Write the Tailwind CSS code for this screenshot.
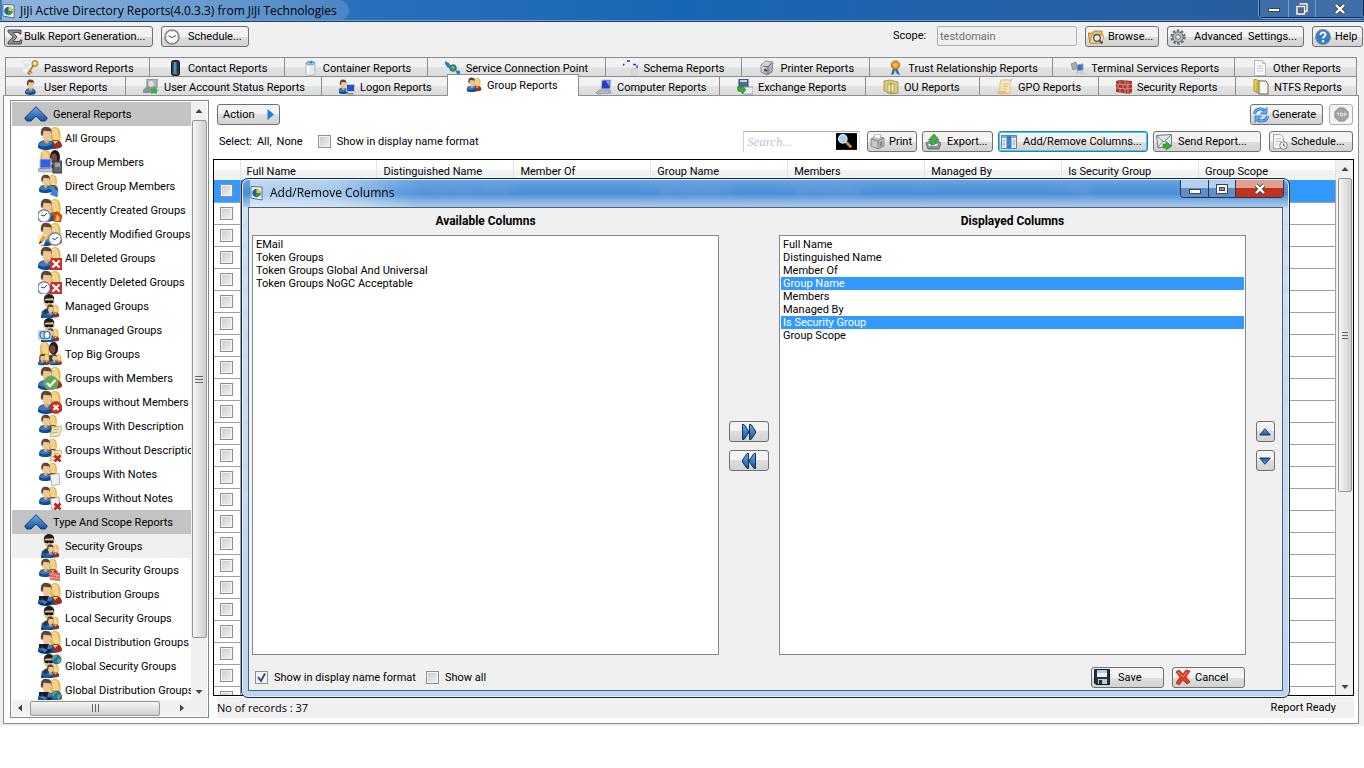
<!DOCTYPE html>
<html lang="en">
<head>
  <meta charset="UTF-8" />
  <meta name="viewport" content="width=device-width, initial-scale=1.0" />
  <title>JiJi Active Directory Reports</title>
  <script src="https://cdn.jsdelivr.net/npm/@tailwindcss/browser@4"></script>
</head>
<body class="bg-white font-['Roboto','Liberation_Sans',sans-serif] text-[11px] leading-[13px] text-black">

  <!-- Icon parts -->
  <svg class="absolute size-0 overflow-hidden">
    <defs>
      <linearGradient id="blue" x1="0" y1="0" x2="0" y2="1"><stop offset="0" stop-color="#6fabe4" /><stop offset="1" stop-color="#12529c" /></linearGradient>
      <linearGradient id="metal" x1="0" y1="0" x2="1" y2="1"><stop offset="0" stop-color="#f4f4f4" /><stop offset="1" stop-color="#8b8f94" /></linearGradient>

      <!-- People, 24px -->
      <symbol id="woman" viewBox="0 0 24 24">
        <path d="M12 13c0-4-1-12 5-12 5 0 6 5 5.500 11l-1 4h-8z" fill="#e2b84b" />
        <path d="M14 3c2-2 5-1 6 2l1 8c-1 2-3 3-5 2z" fill="#f4dc86" />
        <ellipse cx="16.500" cy="7.500" rx="2.800" ry="4" fill="#f2cf9c" />
        <path d="M11 22c0-5 2-8 6-8s7 2 7 6c0 2-5 3-9 3z" fill="#9c2f22" />
        <path d="M15 15l2 3 3-3z" fill="#f2cf9c" />
      </symbol>
      <symbol id="man" viewBox="0 0 24 24">
        <path d="M0 21c0-5 3-7 8-7s8 2 8 7c0 4-16 4-16 0z" fill="#174c8c" />
        <path d="M1 19c1-3 3-4 6-4l2 3 3-3c1 0 2 1 3 2-3 3-10 5-14 2z" fill="#3a7cc2" />
        <path d="M6 13h5v3l-2 2-3-2z" fill="#dba876" />
        <ellipse cx="8.500" cy="8" rx="4.500" ry="6" fill="#efc597" />
        <path d="M3 9C2 3 5 0 9 1c4 0 5 3 4.500 7l-1-3c-3 1-5-1-7 0L4.500 10z" fill="#5d4630" />
      </symbol>
      <symbol id="dark" viewBox="0 0 24 24">
        <ellipse cx="17" cy="8" rx="5" ry="7" fill="#1f1b1d" />
        <ellipse cx="16" cy="9" rx="3" ry="4.500" fill="#7b4a3c" />
        <path d="M10 21c0-5 3-6 7-6s7 3 7 7c-4 2-10 2-14-1z" fill="#343a42" />
      </symbol>
      <symbol id="pair" viewBox="0 0 24 24"><use href="#woman" /><use href="#man" /></symbol>
      <symbol id="small" viewBox="0 0 24 24"><use href="#pair" x="1" y="0" width="19" height="19" /></symbol>
      <symbol id="guard" viewBox="0 0 24 24">
        <path d="M3 24c0-6 3-10 8-10s8 3 8 7c-3 3-12 4-16 3z" fill="#2b3947" />
        <ellipse cx="11" cy="7.500" rx="4.500" ry="6.500" fill="#e6bd8d" />
        <path d="M6 8C5 2 8 0 11 0c4 0 6 3 5 7l-1-3c-3 1-6 0-8 1z" fill="#1f1f1f" />
        <path d="M6.500 6.500h9v2.200l-3.500.6-1-1-1 1-3.500-.6z" fill="#0b0b0b" />
      </symbol>
      <symbol id="secure" viewBox="0 0 24 24">
        <use href="#guard" />
        <use href="#pair" x="7" y="10" width="15" height="14" />
        <path d="M4 16c2 4 4 5 8 5l-1 3H7c-3-1-4-4-3-8z" fill="#1d5ba6" />
      </symbol>
      <symbol id="distribution" viewBox="0 0 24 24">
        <use href="#pair" />
        <path d="M1 14h10l-2 5 5 1-3 3H3l3-4-5-1z" fill="#171c25" /><path d="M3 17l7 3-4 3z" fill="#2d7fd0" />
      </symbol>

      <!-- Badges, 24px -->
      <symbol id="clockR" viewBox="0 0 24 24"><circle cx="17" cy="17" r="6.300" fill="#f5f7f8" stroke="#7d858c" stroke-width="1.400" /><path d="M17 17.500l3-2.500M17 17.500l-3-1" stroke="#454b52" fill="none" /></symbol>
      <symbol id="clockL" viewBox="0 0 24 24"><circle cx="6" cy="18" r="6.300" fill="#f5f7f8" stroke="#7d858c" stroke-width="1.400" /><path d="M6 18l3-3M6 18l-3-1" stroke="#454b52" fill="none" /></symbol>
      <symbol id="flame" viewBox="0 0 24 24"><path d="M16 24l-1-8 4-3 5 4-1 7z" fill="#cf4a16" /><path d="M17 23l2-7 3 4-1 3z" fill="#f5b43c" /></symbol>
      <symbol id="pencil" viewBox="0 0 24 24"><path d="M0 13h9l-3 10H0z" fill="#e9edf1" /><path d="M1 22l1-4 3-5 3 2-3 5z" fill="#eba51f" /><path d="M1 22l1-3 2 1z" fill="#222" /></symbol>
      <symbol id="delete" viewBox="0 0 24 24"><path d="M13 12h11v12H12v-8z" fill="#c9302c" /><path d="M14.500 14.500l7 7m0-7l-7 7" stroke="#fff" stroke-width="2.200" /></symbol>
      <symbol id="without" viewBox="0 0 24 24"><circle cx="18" cy="17.500" r="6" fill="#cf2f24" stroke="#8f1a12" stroke-width=".6" /><path d="M15.500 15l5 5m0-5l-5 5" stroke="#fff" stroke-width="2" /></symbol>
      <symbol id="check" viewBox="0 0 24 24"><circle cx="13" cy="17" r="7" fill="#55ad4b" stroke="#8b9a8a" /><path d="M9 17l3 3 5.500-6" stroke="#fff" stroke-width="2.400" fill="none" /></symbol>
      <symbol id="arrow" viewBox="0 0 24 24"><path d="M9 13c5-3 8 0 9 3l2-1-1 8-7-3 2-1c0-3-2-4-5-6z" fill="#2f8be0" stroke="#155a9f" stroke-width=".5" /></symbol>
      <symbol id="desc" viewBox="0 0 24 24"><path d="M14 13l9-1 1 2-3 8-9 1z" fill="#f0e6c0" stroke="#b59d58" stroke-width=".7" /><path d="M15 16l6-1m-7 4l6-1" stroke="#c5ad6b" /></symbol>
      <symbol id="note" viewBox="0 0 24 24"><path d="M12 13l9-2 1 11-8 2z" fill="#eef1f4" stroke="#8b949c" stroke-width=".7" /></symbol>
      <symbol id="xmark" viewBox="0 0 24 24"><path d="M16.500 17.500l6 6m0-6l-6 6" stroke="#c02616" stroke-width="2.600" /></symbol>
      <symbol id="machines" viewBox="0 0 24 24"><path d="M2 9h11v9H2z" fill="#2c62e8" stroke="#b6bcc4" /><path d="M0 19l15-1v4H1z" fill="#c0c5cb" stroke="#777" stroke-width=".5" /><path d="M15 11h9v12h-9z" fill="#62676e" stroke="#33373c" /><path d="M17 14h5m-5 2h5" stroke="#d7dade" /></symbol>
      <symbol id="rings" viewBox="0 0 24 24"><path d="M0 12h13v10H0z" fill="#b9d5f0" /><ellipse cx="5" cy="17" rx="3" ry="3.500" fill="none" stroke="#2f66a8" stroke-width="1.200" /><ellipse cx="9" cy="17" rx="3" ry="3.500" fill="#fff" stroke="#2f66a8" stroke-width="1.200" /></symbol>
      <symbol id="bricks" viewBox="0 0 24 24"><path d="M11 13l11 2v8l-10-1z" fill="#d9604e" /><path d="M11 16l11 2m-11 1l11 2M15 14v2m4 1v3m-5-1v3" stroke="#f0b4a8" stroke-width=".8" /></symbol>
      <symbol id="globe" viewBox="0 0 24 24"><circle cx="12" cy="12" r="11" fill="#2369b8" /><path d="M5 5c4-4 8-3 9-1l-3 4-4 1-1 4-4-1c0-3 1-5 3-7zM13 12l6-3 3 3-3 7-4 2z" fill="#53b04c" /></symbol>
      <symbol id="globeT" viewBox="0 0 24 24"><use href="#globe" x="13" y="0" width="11" height="11" /></symbol>
      <symbol id="globeB" viewBox="0 0 24 24"><use href="#globe" x="13" y="12" width="11" height="11" /></symbol>
      <symbol id="crowd" viewBox="0 0 24 24"><use href="#woman" x="-9" y="-1" width="22" height="22" /><use href="#dark" y="-1" width="22" height="22" /><use href="#pair" y="11" width="12" height="13" /><use href="#pair" x="12" y="11" width="12" height="13" /></symbol>
      <symbol id="team" viewBox="0 0 24 24"><use href="#woman" x="-9" y="-1" width="23" height="23" /><use href="#dark" y="-1" width="24" height="24" /></symbol>

      <!-- Tabs and buttons, 16px -->
      <symbol id="t-password" viewBox="0 0 16 16"><path d="M0 1h8v12H0z" fill="#f4f5f6" stroke="#d3d6da" stroke-width=".6" /><path d="M1 4h5M1 6h5M1 8h4" stroke="#c3c8cd" stroke-width=".8" /><circle cx="12" cy="3.500" r="2.600" fill="none" stroke="#c9952d" stroke-width="1.800" /><path d="M10.500 5.500L5 13m2-2l2 2m-4 0l2 1.500" stroke="#b27e1d" stroke-width="1.700" fill="none" /></symbol>
      <symbol id="t-contact" viewBox="0 0 16 16"><rect x="4.500" y=".5" width="8" height="15" rx="2" fill="#2b3340" stroke="#151a22" /><rect x="6.500" y="2" width="3" height="11" fill="#4b8fc0" /><path d="M6 13.500h4.500" stroke="#5e7f9e" /></symbol>
      <symbol id="t-container" viewBox="0 0 16 16"><path d="M4 3v11c0 2 9 2 9 0V3z" fill="#e3eaf0" stroke="#9aa6b0" stroke-width=".7" /><ellipse cx="8.500" cy="3" rx="4.500" ry="2" fill="#8fc4e6" stroke="#6b9bbd" stroke-width=".7" /><path d="M6 6v8" stroke="#fff" stroke-width="2" /><path d="M7 3l2-2 2 2z" fill="#2d78b8" /></symbol>
      <symbol id="t-scp" viewBox="0 0 16 16"><path d="M0 1l4 2 2 4-3 1-3-4z" fill="#2781c4" /><circle cx="8" cy="8" r="3.300" fill="#3c9c4a" stroke="#1b6aa8" /><path d="M10 10l5 1v4l-3-1z" fill="#2781c4" /><path d="M7 6l2 1-1 2z" fill="#9de07d" /></symbol>
      <symbol id="t-schema" viewBox="0 0 16 16"><path d="M0 6V4.500h2M4 1h3M10 4.500h4V8" stroke="#2434e0" stroke-width="1.300" fill="none" stroke-dasharray="3 1.500" /><path d="M9 9h5v6H9z" fill="#e9ebee" stroke="#b7bcc2" stroke-width=".7" /><path d="M10 11h3m-3 2h3" stroke="#aeb4bb" stroke-width=".7" /></symbol>
      <symbol id="t-printer" viewBox="0 0 16 16"><path d="M2 5l5-4 7 1-1 10-5 3-6-3z" fill="url(#metal)" stroke="#686d73" stroke-width=".7" /><path d="M4 6l5 1v7M9 7l4-4" stroke="#5c6168" fill="none" /><path d="M5 9l3 .6v2L5 11z" fill="#3d4249" /></symbol>
      <symbol id="t-trust" viewBox="0 0 16 16"><path d="M6 8l-2 7 3-1 1-4 2 4 3 1-3-7z" fill="#2a6dbd" /><circle cx="8.500" cy="5" r="4.300" fill="#e98c1d" stroke="#b9630c" stroke-width=".7" /><circle cx="8.500" cy="5" r="2" fill="#f8c462" /></symbol>
      <symbol id="t-terminal" viewBox="0 0 16 16"><path d="M1 4l5-2 1 6-4 2z" fill="#a8adb3" stroke="#7a8087" stroke-width=".7" /><path d="M7 5l6-1v6l-6 1z" fill="#3775d8" stroke="#9da3a9" /><path d="M6 12l8-1 1 3H5z" fill="#c9cdd2" /></symbol>
      <symbol id="t-doc" viewBox="0 0 16 16"><path d="M2.500.5h8l3 3v12h-11z" fill="#fafafa" stroke="#b5b8bc" /><path d="M10.500.5v3h3" fill="#e1e3e5" stroke="#b5b8bc" /><path d="M5 6h6M5 8.500h6M5 11h6" stroke="#c5c8cb" /></symbol>
      <symbol id="t-user" viewBox="0 0 16 16"><use href="#man" x="2" width="16" height="16" /></symbol>
      <symbol id="t-status" viewBox="0 0 16 16"><path d="M4 0h10v9H4z" fill="#b5b9be" stroke="#777c82" /><path d="M0 11l4-4h6l4 4v3H0z" fill="#8e9399" /><ellipse cx="8" cy="5" rx="2.500" ry="3" fill="#dcdfe2" /><path d="M12 7l1 3 3 1-3 1 1 3-3-1-3 1 1-3-2-2h3z" fill="#35b233" /></symbol>
      <symbol id="t-logon" viewBox="0 0 16 16"><use href="#man" x="-1" width="15" height="15" /><path d="M7.500 5.500h8v7h-8z" fill="#2450cf" stroke="#c4c8cd" /><path d="M9 14h5l1 1.500H8z" fill="#888e95" /></symbol>
      <symbol id="t-group" viewBox="0 0 16 16"><use href="#pair" width="16" height="15" /></symbol>
      <symbol id="t-computer" viewBox="0 0 16 16"><path d="M6 1h9l-1 9H5z" fill="#2043cf" stroke="#c2c6cb" /><path d="M10 2h4l-1 5z" fill="#7d9cf5" /><path d="M3 11h11l1 3-13 1-2-1z" fill="#b8bcc2" stroke="#7e848b" stroke-width=".7" /></symbol>
      <symbol id="t-exchange" viewBox="0 0 16 16"><path d="M2 0h9v9H2z" fill="#4d6f92" stroke="#36495c" /><path d="M3 2h7" stroke="#c1d3e4" stroke-width="2" /><path d="M6 8h10v7H6z" fill="#eceff2" stroke="#868c93" stroke-width=".8" /><path d="M0 8l5 0V6l4 5-4 4v-2L1 12z" fill="#35ad2e" stroke="#1c7217" stroke-width=".5" /></symbol>
      <symbol id="t-ou" viewBox="0 0 16 16"><path d="M1 2l6-1 8 2v11l-7 1-7-3z" fill="#d9c877" stroke="#96853a" stroke-width=".7" /><path d="M5 5h6v8H5z" fill="#f6eebb" stroke="#a89a52" stroke-width=".8" /><path d="M8 4v10" stroke="#8e8243" /></symbol>
      <symbol id="t-gpo" viewBox="0 0 16 16"><path d="M4 1h11c-2 1-2 3-2 5v8H3V5z" fill="#fbe9c0" stroke="#d9b170" stroke-width=".8" /><path d="M0 12h9c0 2 1 3 3 3H2c-1 0-2-1-2-3z" fill="#f0b870" /><path d="M6 5h5M6 7.500h5M6 10h4" stroke="#dcb678" /></symbol>
      <symbol id="t-security" viewBox="0 0 16 16"><path d="M0 2l4-1 12 1v11l-3 2-13-2z" fill="#a83a2b" /><path d="M0 5l12 1 4-1M0 9l12 1 4-1M4 2v4m5-4v4M2 6v3m5-3v4m4-4v4M4 9v5m5-4v4M12 3v12" stroke="#dba397" stroke-width=".8" fill="none" /></symbol>
      <symbol id="t-ntfs" viewBox="0 0 16 16"><path d="M1 0l6 2v13l-6-3z" fill="#e7d04b" stroke="#9a8823" stroke-width=".8" /><path d="M6 2h7l2 3v10H6z" fill="#f6f6f0" stroke="#5b5a4b" stroke-width=".9" /><path d="M4 3v11" stroke="#b39f2e" /></symbol>

      <symbol id="i-app" viewBox="0 0 14 16"><path d="M1 1.500l11 .5v13L1 13z" fill="#f7f9fb" stroke="#5b6b7b" /><circle cx="6.500" cy="8" r="4.300" fill="#1c64a9" /><path d="M6.500 3.700c3 0 4.500 2 4.300 4.600L6.500 8z" fill="#e8c637" /><path d="M6.500 8l4 1c-1 2.500-3 3.500-5 3z" fill="#3d9c3a" /></symbol>
      <symbol id="i-sigma" viewBox="0 0 16 16"><path d="M1 1h13v4h-2V3.500H6L10 8l-4 4.500h7V11h2l-1 4H1v-2l5-5-5-5z" fill="#8a8e92" stroke="#35383b" stroke-width=".8" /></symbol>
      <symbol id="i-clock" viewBox="0 0 16 16"><circle cx="8" cy="8" r="7" fill="#f7f9fa" stroke="#7f868c" stroke-width="1.600" /><path d="M8 8.500l4-2M8 8.500L4.500 7" stroke="#4f555a" fill="none" /><path d="M8 2v1M8 13v1M2 8h1M13 8h1" stroke="#999" /></symbol>
      <symbol id="i-browse" viewBox="0 0 16 16"><path d="M0 4h5l1-2h8v12H2z" fill="#e7b963" stroke="#a67622" stroke-width=".8" /><path d="M2 14l2-8h12l-2 8z" fill="#f9dfa0" stroke="#b98a35" stroke-width=".7" /><circle cx="9" cy="9" r="3.300" fill="#d8e9f5" stroke="#4a4d50" stroke-width="1.200" /><path d="M11.500 11.500l3 3" stroke="#4a4d50" stroke-width="1.800" /></symbol>
      <symbol id="i-gear" viewBox="0 0 16 16"><circle cx="8" cy="8" r="6.200" fill="none" stroke="#70777f" stroke-width="3" stroke-dasharray="2.400 1.500" /><circle cx="8" cy="8" r="5.200" fill="#b3bac1" stroke="#6d747b" /><circle cx="8" cy="8" r="2.300" fill="#eef0f2" stroke="#6d747b" /></symbol>
      <symbol id="i-help" viewBox="0 0 16 16"><circle cx="8" cy="8" r="7.300" fill="#2c7fd0" stroke="#6f8294" stroke-width="1.200" /><path d="M5.500 6c0-3.500 5-3.300 5-.5C10.500 7.500 8 7.500 8 9.600" fill="none" stroke="#fff" stroke-width="1.900" /><circle cx="8" cy="12.200" r="1.200" fill="#fff" /></symbol>
      <symbol id="i-refresh" viewBox="0 0 16 16"><path d="M1.500 7C2 2 8 .500 11.500 3.500M14.500 9c-.5 5-6.500 6.500-10 3.500" fill="none" stroke="#1f70c4" stroke-width="3" /><path d="M1.500 7C2 2 8 .500 11.500 3.500M14.500 9c-.5 5-6.500 6.500-10 3.500" fill="none" stroke="#5db2f5" stroke-width="1.600" /><path d="M14 .5V7H7.500zM2 15.500V9h6.500z" fill="#5db2f5" stroke="#1f70c4" stroke-width=".7" /></symbol>
      <symbol id="i-print" viewBox="0 0 16 16"><path d="M1 5l5-3 8 2v8l-6 3-7-3z" fill="#c5c8cc" stroke="#75797e" stroke-width=".8" /><path d="M1 5l7 2 6-3M8 7v8" stroke="#7f8388" fill="none" /><path d="M4 4l1-4 6 1-1 4z" fill="#fff" stroke="#9a9ea2" stroke-width=".7" /><path d="M9.500 8l3-1v5l-3 1z" fill="#85898e" /></symbol>
      <symbol id="i-export" viewBox="0 0 16 16"><path d="M1 9l4-2h8l3 2-2 6H3z" fill="#8a94a0" stroke="#525b66" stroke-width=".8" /><path d="M3 10h10l-1 2H4z" fill="#e0e5ea" /><path d="M6 11V6H3.500L9 0l5 6h-3c0 3-1 5-5 5z" fill="#42b43c" stroke="#1e7a1a" stroke-width=".7" /></symbol>
      <symbol id="i-columns" viewBox="0 0 16 16"><path d="M.5 1.500h15v13H.5z" fill="#fff" stroke="#6285a8" /><path d="M1 2h14v2H1z" fill="#86a9cc" /><path d="M6 2h4v12H6z" fill="#2c7cd4" /><path d="M1 7h14M1 10h14M5.500 2v12M10.500 2v12M3 4v10M13 4v10" stroke="#7f9fbe" stroke-width=".7" /></symbol>
      <symbol id="i-send" viewBox="0 0 16 16"><path d="M.5 1.500l15-1v11L2 14z" fill="#e5e8ea" stroke="#73787d" /><path d="M1 2l7 6 7-7M2 13l5-6m7 4L9 7" stroke="#8a8f94" fill="none" /><path d="M7 10h3V8l6 4-6 4v-2H7z" fill="#35ad2e" stroke="#1c7217" stroke-width=".5" /></symbol>
      <symbol id="i-report" viewBox="0 0 16 16"><path d="M1.500.5h7l3 3v11h-10z" fill="#fafafa" stroke="#a4a8ac" /><path d="M3.500 5h6m-6 2.500h6m-6 2.500h3" stroke="#b9bdc1" /><circle cx="11.500" cy="11.500" r="3.800" fill="#eef1f3" stroke="#7a8086" /><path d="M11.500 9.500v2l1.500.8" stroke="#555" fill="none" stroke-width=".9" /></symbol>
      <symbol id="i-stop" viewBox="0 0 16 16"><path d="M5 1h6l4 4v6l-4 4H5l-4-4V5z" fill="#a3a3a3" stroke="#8b8b8b" /><path d="M3 6.500h2.500m-1 0v3M7 6.500h2v3H7zM11 10V6.500h2v2h-2" stroke="#e4e4e4" fill="none" /></symbol>
      <symbol id="i-save" viewBox="0 0 16 16"><path d="M.5.500h15v15H2l-1.500-1.500z" fill="#2a3340" stroke="#141a22" /><path d="M3 1h10v7H3z" fill="#eaf3fb" /><path d="M3 1h10v3H3z" fill="#a9cdee" /><path d="M4 10h9v5H4z" fill="#c3c8ce" /><path d="M5 11h3v4H5z" fill="#252b33" /></symbol>
      <symbol id="i-cancel" viewBox="0 0 16 16"><path d="M1 3l3-2 4 4 3-4 4 1-4 6 4 5-3 2-4-4-4 5-3-2 4-6z" fill="#e23f22" stroke="#a52410" stroke-width=".8" /><path d="M3 3l5 5 4-5" stroke="#f58a5c" fill="none" /></symbol>
      <symbol id="i-up" viewBox="0 0 24 16"><path d="M12 .700L.7 12l2 3H7l5-5 5 5h4.300l2-3z" fill="url(#blue)" stroke="#123e78" /></symbol>
      <symbol id="i-next" viewBox="0 0 16 16"><path d="M1.500.5h1.500L7.500 7v2L3 15.500H1.500zM8.500.500H10l4.500 6.500v2L10 15.500H8.500z" fill="url(#blue)" stroke="#0d315f" /></symbol>
      <symbol id="i-tri" viewBox="0 0 12 8"><path d="M6 .7L11.300 7H.7z" fill="url(#blue)" stroke="#123e78" /></symbol>
      <symbol id="i-find" viewBox="0 0 20 16"><path d="M0 0h20v16H0z" fill="#000" /><path d="M9.500 8.500l5 5" stroke="#d98a3c" stroke-width="2.600" /><circle cx="6.500" cy="5.500" r="4" fill="#9fd1f5" stroke="#e5eef5" stroke-width="1.200" /></symbol>
      <symbol id="i-arrow" viewBox="0 0 8 8"><path d="M4 2L7.500 6h-7z" fill="#434343" /></symbol>
    </defs>
  </svg>

  <div class="flex h-[calc(100vh-42px)] flex-col overflow-hidden bg-[#f0f0f0]">

    <!-- Title bar -->
    <header class="flex h-[22px] shrink-0 items-start justify-between border-b border-[#1c3f6b] bg-linear-to-r from-[#3b7cc0] via-[#1766b5] to-[#2b5c99] pl-[2px] shadow-[inset_0_-1px_0_#6f9fd3]">
      <div class="flex h-[21px] items-center gap-1 rounded-r-full bg-linear-to-r from-[#8fb5dd] via-[#6d9fd3] to-[#5d92cb]/60 pr-3">
        <svg class="h-4 w-[14px]"><use href="#i-app" /></svg>
        <h1 class="font-['Open_Sans','Noto_Sans',sans-serif] text-xs leading-5">JiJi Active Directory Reports(4.0.3.3) from JiJi Technologies</h1>
      </div>
      <div class="flex h-[18px] rounded-b border border-t-0 border-[#0c2b52] shadow-[0_0_0_1px_#7b9cc4]">
        <button aria-label="Minimize" class="flex w-[29px] items-end justify-center border-r border-[#7b9cc4] bg-[#3f6ea8] pb-[5px]"><span class="h-[4px] w-3 border border-[#444] bg-white"></span></button>
        <button aria-label="Restore" class="flex w-[27px] items-center justify-center border-r border-[#7b9cc4] bg-[#3f6ea8]"><svg class="size-3" viewBox="0 0 12 12"><path d="M3.500 1h7.500v7.500H8.500M1 3.500h7.500V11H1z" fill="none" stroke="#444" stroke-width="2.600" /><path d="M3.500 1h7.500v7.500H8.500M1 3.500h7.500V11H1z" fill="none" stroke="#fff" stroke-width="1.500" /></svg></button>
        <button aria-label="Close" class="flex w-[47px] items-center justify-center bg-[#3f6ea8]"><svg class="size-3" viewBox="0 0 12 12"><path d="M2 2l8 8m0-8l-8 8" stroke="#444" stroke-width="4" /><path d="M2 2l8 8m0-8l-8 8" stroke="#fff" stroke-width="2.400" /></svg></button>
      </div>
    </header>

    <!-- Toolbar -->
    <div class="flex h-[35px] shrink-0 items-start gap-2 pt-1 pr-px pl-1">
      <button class="flex h-[21px] w-[149px] items-center gap-px rounded-[3px] border border-[#707070] bg-linear-to-b from-[#f3f3f3] from-50% via-[#dedede] via-50% to-[#d2d2d2] px-[2px] whitespace-nowrap"><svg class="size-4 shrink-0"><use href="#i-sigma" /></svg>Bulk Report Generation...</button>
      <button class="flex h-[21px] w-[88px] items-center gap-2 rounded-[3px] border border-[#707070] bg-linear-to-b from-[#f3f3f3] from-50% via-[#dedede] via-50% to-[#d2d2d2] px-[2px] whitespace-nowrap"><svg class="size-4 shrink-0"><use href="#i-clock" /></svg>Schedule...</button>
      <label for="scope" class="ml-auto w-9 pt-[3px]">Scope:</label>
      <input id="scope" type="text" value="testdomain" disabled class="h-5 w-[140px] rounded-[2px] border border-[#afafaf] bg-[#f0f0f0] px-[2px] text-[#6d6d6d]" />
      <button class="flex h-[21px] w-[74px] items-center gap-1 rounded-[3px] border border-[#707070] bg-linear-to-b from-[#f3f3f3] from-50% via-[#dedede] via-50% to-[#d2d2d2] px-[2px] whitespace-nowrap"><svg class="size-4 shrink-0"><use href="#i-browse" /></svg>Browse...</button>
      <button class="flex h-[21px] w-[137px] items-center gap-2 rounded-[3px] border border-[#707070] bg-linear-to-b from-[#f3f3f3] from-50% via-[#dedede] via-50% to-[#d2d2d2] px-[2px] whitespace-nowrap"><svg class="size-4 shrink-0"><use href="#i-gear" /></svg>Advanced&nbsp; Settings...</button>
      <button class="flex h-[21px] w-[51px] items-center gap-1 rounded-[3px] border border-[#707070] bg-linear-to-b from-[#f3f3f3] from-50% via-[#dedede] via-50% to-[#d2d2d2] px-[2px] whitespace-nowrap"><svg class="size-4 shrink-0"><use href="#i-help" /></svg>Help</button>
    </div>

    <!-- Tabs -->
    <nav class="shrink-0 pr-[7px] pl-[5px]">
      <div id="tabsTop" class="grid h-[19px] grid-cols-[144fr_135fr_143fr_178fr_137fr_128fr_183fr_182fr_122fr] border-l border-[#8c8e94]"></div>
      <div id="tabsBottom" class="grid h-[19px] grid-cols-[120fr_196fr_126fr_131fr_141fr_146fr_114fr_119fr_137fr_121fr] border-l border-[#8c8e94]"></div>
    </nav>

    <!-- Tab page -->
    <main class="mr-[5px] mb-[2px] ml-[3px] flex min-h-0 flex-1 gap-1 border border-[#8c8e94] bg-white pt-1 pr-1 pb-[5px] pl-[6px]">

      <!-- Report list -->
      <aside class="flex w-[199px] shrink-0 flex-col border border-[#828790] p-px">
        <div class="flex min-h-0 flex-1">
          <ul id="reports" class="min-w-0 flex-1 overflow-hidden"></ul>
          <div class="flex w-4 shrink-0 flex-col items-center bg-[#f0f0f0]">
            <svg class="h-[18px] w-2"><use href="#i-arrow" y="5" width="8" height="8" /></svg>
            <div class="flex w-[15px] basis-[518px] flex-col items-center justify-center gap-[2px] rounded-[2px] border border-[#979797] bg-linear-to-r from-[#f5f5f5] to-[#cfcfcf]">
              <span class="h-px w-2 bg-[#666]"></span><span class="h-px w-2 bg-[#666]"></span><span class="h-px w-2 bg-[#666]"></span>
            </div>
            <svg class="mt-auto h-4 w-2 rotate-180"><use href="#i-arrow" y="4" width="8" height="8" /></svg>
          </div>
        </div>
        <div class="flex h-4 items-center gap-[2px] bg-[#f0f0f0] pr-[17px]">
          <svg class="size-4 shrink-0 -rotate-90"><use href="#i-arrow" x="4" y="4" width="8" height="8" /></svg>
          <div class="flex h-[15px] w-[130px] items-center justify-center gap-[2px] rounded-[2px] border border-[#979797] bg-linear-to-b from-[#f5f5f5] to-[#cfcfcf]">
            <span class="h-2 w-px bg-[#666]"></span><span class="h-2 w-px bg-[#666]"></span><span class="h-2 w-px bg-[#666]"></span>
          </div>
          <svg class="ml-auto size-4 shrink-0 rotate-90"><use href="#i-arrow" x="4" y="4" width="8" height="8" /></svg>
        </div>
      </aside>

      <!-- Report -->
      <section class="flex min-w-0 flex-1 flex-col pt-1">
        <div class="flex gap-[6px] pr-px pl-1">
          <button class="flex h-[21px] w-[63px] items-center justify-between rounded-[3px] border border-[#707070] bg-linear-to-b from-[#f3f3f3] from-50% via-[#dedede] via-50% to-[#d2d2d2] px-[5px]">Action<svg class="h-[11px] w-[7px]" viewBox="0 0 7 11"><path d="M.5 0L7 5.500.500 11z" fill="#1f7fdc" /></svg></button>
          <button class="ml-auto flex h-[21px] w-[73px] items-center gap-[3px] rounded-[3px] border border-[#707070] bg-linear-to-b from-[#f3f3f3] from-50% via-[#dedede] via-50% to-[#d2d2d2] px-[2px]"><svg class="size-4 shrink-0"><use href="#i-refresh" /></svg>Generate</button>
          <button aria-label="Stop" disabled class="flex h-[21px] w-[24px] items-center justify-center rounded-[3px] border border-[#adadad] bg-[#f4f4f4]"><svg class="size-[15px]" viewBox="0 0 16 16"><use href="#i-stop" /></svg></button>
        </div>

        <div class="mt-[6px] flex items-center gap-[5px] pr-px pl-[6px]">
          <span>Select:</span>
          <a href="#">All,</a>
          <a href="#">None</a>
          <label class="ml-[10px] flex items-center gap-[6px]"><input type="checkbox" class="size-[13px] appearance-none border border-[#8e8f8f] bg-linear-to-br from-[#c4c9cf] to-[#f4f4f4] shadow-[inset_0_0_0_1px_#f4f4f4]" />Show in display name format</label>
          <div class="mr-[2px] ml-auto flex h-[21px] w-[117px] items-center border border-r-[#e3e3e3] border-b-white border-l-[#d0d0d0] border-t-[#abadb3] bg-white pr-[2px]">
            <input type="text" aria-label="Search" placeholder="Search..." class="w-[90px] pl-[3px] font-['Liberation_Serif',serif] text-[13px] italic placeholder:text-[#b9c6d3]" />
            <button aria-label="Find" class="ml-auto"><svg class="h-[17px] w-[21px]" ><use href="#i-find" /></svg></button>
          </div>
          <button class="flex h-[21px] w-[50px] items-center gap-[3px] rounded-[3px] border border-[#707070] bg-linear-to-b from-[#f3f3f3] from-50% via-[#dedede] via-50% to-[#d2d2d2] px-[2px] whitespace-nowrap"><svg class="size-4 shrink-0"><use href="#i-print" /></svg>Print</button>
          <button class="flex h-[21px] w-[71px] items-center gap-[6px] rounded-[3px] border border-[#707070] bg-linear-to-b from-[#f3f3f3] from-50% via-[#dedede] via-50% to-[#d2d2d2] px-[2px] whitespace-nowrap"><svg class="size-4 shrink-0"><use href="#i-export" /></svg>Export...</button>
          <button class="flex h-[21px] w-[150px] items-center gap-[6px] rounded-[3px] border border-[#2a7fae] bg-linear-to-b from-[#f3f3f3] from-50% via-[#dedede] via-50% to-[#d2d2d2] px-[2px] whitespace-nowrap shadow-[inset_0_0_0_1px_#48c8f5]"><svg class="size-4 shrink-0"><use href="#i-columns" /></svg>Add/Remove Columns...</button>
          <button class="mr-[3px] flex h-[21px] w-[108px] items-center gap-[6px] rounded-[3px] border border-[#707070] bg-linear-to-b from-[#f3f3f3] from-50% via-[#dedede] via-50% to-[#d2d2d2] px-[2px] whitespace-nowrap"><svg class="size-4 shrink-0"><use href="#i-send" /></svg>Send Report...</button>
          <button class="flex h-[21px] w-[84px] items-center gap-[3px] rounded-[3px] border border-[#707070] bg-linear-to-b from-[#f3f3f3] from-50% via-[#dedede] via-50% to-[#d2d2d2] px-[2px] whitespace-nowrap"><svg class="size-4 shrink-0"><use href="#i-report" /></svg>Schedule...</button>
        </div>

        <div class="relative mt-[7px] min-h-0 flex-1">
          <div class="flex h-full overflow-hidden border border-black">
            <div class="min-w-0 flex-1 overflow-hidden">
              <table class="w-full table-fixed border-collapse text-left">
                <thead>
                  <tr class="h-5 bg-linear-to-b from-white from-50% to-[#f1f2f4] to-50%">
                    <th class="w-[26px] border-r border-[#e2e3e6]"></th>
                    <th class="border-r border-[#e2e3e6] pt-[2px] pl-[6px] font-normal">Full Name</th>
                    <th class="border-r border-[#e2e3e6] pt-[2px] pl-[6px] font-normal">Distinguished Name</th>
                    <th class="border-r border-[#e2e3e6] pt-[2px] pl-[6px] font-normal">Member Of</th>
                    <th class="border-r border-[#e2e3e6] pt-[2px] pl-[6px] font-normal">Group Name</th>
                    <th class="border-r border-[#e2e3e6] pt-[2px] pl-[6px] font-normal">Members</th>
                    <th class="border-r border-[#e2e3e6] pt-[2px] pl-[6px] font-normal">Managed By</th>
                    <th class="border-r border-[#e2e3e6] pt-[2px] pl-[6px] font-normal">Is Security Group</th>
                    <th class="border-r border-[#e2e3e6] pt-[2px] pl-[6px] font-normal">Group Scope</th>
                  </tr>
                </thead>
                <tbody id="rows"></tbody>
              </table>
            </div>
            <div class="flex w-[17px] shrink-0 flex-col items-center bg-[#f0f0f0]">
              <svg class="h-[18px] w-2"><use href="#i-arrow" y="5" width="8" height="8" /></svg>
              <div class="flex w-[14px] basis-[314px] flex-col items-center justify-center gap-[2px] rounded-[2px] border border-[#979797] bg-linear-to-r from-[#f5f5f5] to-[#cfcfcf]">
                <span class="h-px w-[6px] bg-[#666]"></span><span class="h-px w-[6px] bg-[#666]"></span><span class="h-px w-[6px] bg-[#666]"></span>
              </div>
              <svg class="mt-auto h-4 w-2 rotate-180"><use href="#i-arrow" y="4" width="8" height="8" /></svg>
            </div>
          </div>

          <!-- Add/Remove Columns dialog -->
          <div role="dialog" aria-labelledby="dialogTitle" class="absolute top-[19px] right-16 -bottom-[2px] left-7 flex flex-col rounded-[7px] border border-[#1b2a3c] bg-linear-to-b from-[#a9c8ea]/50 to-[#b9d6f3] px-[6px] pb-[6px] shadow-[inset_0_0_0_1px_#e3effb] backdrop-blur-[3px]">
            <div class="-mx-[5px] mt-px flex h-[27px] shrink-0 items-start rounded-t-[6px] bg-linear-to-b from-[#5f9ad8]/70 via-[#2f78c4]/60 to-[#a5c8ec] pl-[7px]">
              <div class="flex h-full items-center gap-[6px] bg-linear-to-r from-white/60 via-white/50 to-transparent pr-6 pb-px">
                <svg class="h-4 w-[14px]"><use href="#i-app" /></svg>
                <h2 id="dialogTitle" class="font-['Open_Sans','Noto_Sans',sans-serif] text-xs leading-5">Add/Remove Columns</h2>
              </div>
              <div class="mr-1 ml-auto flex h-[18px] overflow-hidden rounded-b border border-t-0 border-[#1f3a5c]">
                <button aria-label="Minimize" class="flex w-[28px] items-end justify-center border-r border-[#1f3a5c] bg-linear-to-b from-[#b5d0ec] from-50% to-[#5f8fc4] to-50% pb-[3px]"><span class="h-[5px] w-3 border border-[#444] bg-white"></span></button>
                <button aria-label="Maximize" class="flex w-[27px] items-center justify-center border-r border-[#1f3a5c] bg-linear-to-b from-[#b5d0ec] from-50% to-[#5f8fc4] to-50%"><span class="flex h-[10px] w-3 items-center justify-center border border-[#444] bg-white"><span class="h-[4px] w-[6px] border border-[#444] bg-[#6d9bcd]"></span></span></button>
                <button aria-label="Close dialog" class="flex w-[47px] items-center justify-center bg-linear-to-b from-[#e0a090] from-50% to-[#c2321b] to-50%"><svg class="size-3" viewBox="0 0 12 12"><path d="M2 2l8 8m0-8l-8 8" stroke="#444" stroke-width="4" /><path d="M2 2l8 8m0-8l-8 8" stroke="#fff" stroke-width="2.400" /></svg></button>
              </div>
            </div>

            <div class="flex min-h-0 flex-1 flex-col border border-[#4f6275] bg-[#f0f0f0] pl-[3px]">
              <div class="flex min-h-0 flex-1">
                <div class="flex min-w-0 flex-1 flex-col">
                  <label for="available" class="h-[27px] pt-[6px] text-center text-xs leading-[14px] font-bold">Available Columns</label>
                  <select id="available" multiple class="min-h-0 flex-1 overflow-hidden border border-[#828790] bg-white px-[2px] pt-[2px] text-[11px]">
                    <option class="h-[13px] min-h-0 p-0 px-px leading-[13px]">EMail</option>
                    <option class="h-[13px] min-h-0 p-0 px-px leading-[13px]">Token Groups</option>
                    <option class="h-[13px] min-h-0 p-0 px-px leading-[13px]">Token Groups Global And Universal</option>
                    <option class="h-[13px] min-h-0 p-0 px-px leading-[13px]">Token Groups NoGC Acceptable</option>
                  </select>
                </div>
                <div class="flex w-[60px] shrink-0 flex-col items-center justify-center gap-2 pt-[29px]">
                  <button aria-label="Add column" class="flex h-[21px] w-10 items-center justify-center rounded-[3px] border border-[#707070] bg-linear-to-b from-[#f3f3f3] from-50% via-[#dedede] via-50% to-[#d2d2d2]"><svg class="size-4"><use href="#i-next" /></svg></button>
                  <button aria-label="Remove column" class="flex h-[21px] w-10 items-center justify-center rounded-[3px] border border-[#707070] bg-linear-to-b from-[#f3f3f3] from-50% via-[#dedede] via-50% to-[#d2d2d2]"><svg class="size-4 -scale-x-100"><use href="#i-next" /></svg></button>
                </div>
                <div class="flex min-w-0 flex-1 flex-col">
                  <label for="displayed" class="h-[27px] pt-[6px] text-center text-xs leading-[14px] font-bold">Displayed Columns</label>
                  <select id="displayed" multiple class="min-h-0 flex-1 overflow-hidden border border-[#828790] bg-white px-px pt-[2px] text-[11px]">
                    <option class="h-[13px] min-h-0 p-0 px-[2px] leading-[13px]">Full Name</option>
                    <option class="h-[13px] min-h-0 p-0 px-[2px] leading-[13px]">Distinguished Name</option>
                    <option class="h-[13px] min-h-0 p-0 px-[2px] leading-[13px]">Member Of</option>
                    <option selected class="h-[13px] min-h-0 bg-linear-to-b from-[#3399ff] to-[#3399ff] p-0 px-[2px] leading-[13px] [-webkit-text-fill-color:white]">Group Name</option>
                    <option class="h-[13px] min-h-0 p-0 px-[2px] leading-[13px]">Members</option>
                    <option class="h-[13px] min-h-0 p-0 px-[2px] leading-[13px]">Managed By</option>
                    <option selected class="h-[13px] min-h-0 bg-linear-to-b from-[#3399ff] to-[#3399ff] p-0 px-[2px] leading-[13px] [-webkit-text-fill-color:white]">Is Security Group</option>
                    <option class="h-[13px] min-h-0 p-0 px-[2px] leading-[13px]">Group Scope</option>
                  </select>
                </div>
                <div class="flex w-9 shrink-0 flex-col items-center justify-center gap-2 pt-[29px] pl-[2px]">
                  <button aria-label="Move up" class="flex h-[21px] w-[19px] items-center justify-center rounded-[3px] border border-[#707070] bg-linear-to-b from-[#f3f3f3] from-50% via-[#dedede] via-50% to-[#d2d2d2]"><svg class="h-2 w-3"><use href="#i-tri" /></svg></button>
                  <button aria-label="Move down" class="flex h-[21px] w-[19px] items-center justify-center rounded-[3px] border border-[#707070] bg-linear-to-b from-[#f3f3f3] from-50% via-[#dedede] via-50% to-[#d2d2d2]"><svg class="h-2 w-3 rotate-180"><use href="#i-tri" /></svg></button>
                </div>
              </div>
              <div class="flex h-[35px] shrink-0 items-center gap-2 pt-[10px] pr-[37px] pb-px pl-[3px]">
                <label class="mr-[2px] flex items-center gap-[6px]">
                  <span class="grid *:col-start-1 *:row-start-1">
                    <input type="checkbox" checked class="peer size-[13px] appearance-none border border-[#8e8f8f] bg-[#f4f4f4]" />
                    <svg class="hidden size-[13px] peer-checked:block" viewBox="0 0 13 13"><path d="M3 6l3 4 4-7.500" fill="none" stroke="#2f4d86" stroke-width="2" /></svg>
                  </span>
                  Show in display name format
                </label>
                <label class="flex items-center gap-[6px]"><input type="checkbox" class="size-[13px] appearance-none border border-[#8e8f8f] bg-linear-to-br from-[#c4c9cf] to-[#f4f4f4] shadow-[inset_0_0_0_1px_#f4f4f4]" />Show all</label>
                <button class="ml-auto flex h-[21px] w-[73px] items-center gap-2 rounded-[3px] border border-[#707070] bg-linear-to-b from-[#f3f3f3] from-50% via-[#dedede] via-50% to-[#d2d2d2] px-[2px]"><svg class="size-4"><use href="#i-save" /></svg>Save</button>
                <button class="flex h-[21px] w-[73px] items-center gap-1 rounded-[3px] border border-[#707070] bg-linear-to-b from-[#f3f3f3] from-50% via-[#dedede] via-50% to-[#d2d2d2] px-[2px]"><svg class="size-4"><use href="#i-cancel" /></svg>Cancel</button>
              </div>
            </div>
          </div>
        </div>

        <!-- Status bar -->
        <footer class="mt-px ml-1 flex h-[21px] shrink-0 items-center justify-between bg-[#f0f0f0] pr-[18px]">
          <span class="font-['Open_Sans','Noto_Sans',sans-serif]">No of records : 37</span>
          <span>Report Ready</span>
        </footer>
      </section>
    </main>
  </div>

  <script>
    const tabsTop = [
      ['Password Reports', 't-password'], ['Contact Reports', 't-contact'], ['Container Reports', 't-container'],
      ['Service Connection Point', 't-scp'], ['Schema Reports', 't-schema'], ['Printer Reports', 't-printer'],
      ['Trust Relationship Reports', 't-trust'], ['Terminal Services Reports', 't-terminal'], ['Other Reports', 't-doc']
    ];
    const tabsBottom = [
      ['User Reports', 't-user'], ['User Account Status Reports', 't-status'], ['Logon Reports', 't-logon'],
      ['Group Reports', 't-group'], ['Computer Reports', 't-computer'], ['Exchange Reports', 't-exchange'],
      ['OU Reports', 't-ou'], ['GPO Reports', 't-gpo'], ['Security Reports', 't-security'], ['NTFS Reports', 't-ntfs']
    ];
    const activeTab = 'Group Reports';

    // Each report: label, then the icon layers from back to front
    const reports = [
      { title: 'General Reports' },
      ['All Groups', 'pair'],
      ['Group Members', 'team', 'machines'],
      ['Direct Group Members', 'small', 'arrow'],
      ['Recently Created Groups', 'pair', 'clockL', 'flame'],
      ['Recently Modified Groups', 'pair', 'pencil', 'clockR'],
      ['All Deleted Groups', 'pair', 'delete'],
      ['Recently Deleted Groups', 'pair', 'clockL', 'delete'],
      ['Managed Groups', 'secure'],
      ['Unmanaged Groups', 'secure', 'rings'],
      ['Top Big Groups', 'crowd'],
      ['Groups with Members', 'pair', 'check'],
      ['Groups without Members', 'pair', 'without'],
      ['Groups With Description', 'small', 'desc'],
      ['Groups Without Description', 'small', 'desc', 'xmark'],
      ['Groups With Notes', 'small', 'note'],
      ['Groups Without Notes', 'small', 'note', 'xmark'],
      { title: 'Type And Scope Reports' },
      ['Security Groups', 'secure'],
      ['Built In Security Groups', 'small', 'bricks'],
      ['Distribution Groups', 'distribution'],
      ['Local Security Groups', 'secure'],
      ['Local Distribution Groups', 'distribution'],
      ['Global Security Groups', 'secure', 'globeT'],
      ['Global Distribution Groups', 'distribution', 'globeB']
    ];
    const activeReport = 'Security Groups';

    function tabHtml([label, icon]) {
      const look = label === activeTab
        ? 'relative -mt-[2px] -mb-px bg-white border-l -ml-px pl-[18px] pb-px'
        : 'bg-linear-to-b from-[#f2f2f2] from-50% via-[#e4e4e4] via-50% to-[#dadada] pl-[17px] pt-[2px]';
      return `<a href="#" class="flex items-center gap-[5px] overflow-hidden border-t border-r border-[#8c8e94] whitespace-nowrap ${look}">
        <svg class="size-4 shrink-0"><use href="#${icon}" /></svg>${label}</a>`;
    }
    document.getElementById('tabsTop').innerHTML = tabsTop.map(tabHtml).join('');
    document.getElementById('tabsBottom').innerHTML = tabsBottom.map(tabHtml).join('');

    document.getElementById('reports').innerHTML = reports.map(item => {
      if (item.title) {
        return `<li class="flex h-6 items-center gap-[5px] bg-[#c3c3c3] pl-3 whitespace-nowrap"><svg class="h-4 w-6 shrink-0"><use href="#i-up" /></svg>${item.title}</li>`;
      }
      const [label, ...layers] = item;
      const bg = label === activeReport ? 'bg-[#f0f0f0]' : '';
      return `<li class="${bg}"><a href="#" class="flex h-6 items-center gap-[3px] pl-[26px] whitespace-nowrap">
        <svg class="size-6 shrink-0">${layers.map(id => `<use href="#${id}" />`).join('')}</svg>${label}</a></li>`;
    }).join('');

    // Group records; cell values sit behind the dialog
    const firstRow = ['', 'Administrators,CN=B', '', 'Administrators', 'Administrator', '', 'True', ''];
    let rows = '';
    for (let i = 0; i < 24; i++) {
      const look = i === 0 ? 'bg-[#3399ff] text-white' : 'bg-white';
      const cells = firstRow.map((value, column) => `<td class="border-r border-b border-[#a0a0a0] ${column === 1 ? 'pr-1 text-right' : 'pl-[6px]'}">${i === 0 ? value : ''}</td>`).join('');
      rows += `<tr class="h-[22px] ${look}">
        <td class="border-r border-b border-[#a0a0a0]"><input type="checkbox" aria-label="Select record ${i + 1}" class="mx-auto block size-[13px] appearance-none border border-[#8e8f8f] bg-linear-to-br from-[#c4c9cf] to-[#f4f4f4] shadow-[inset_0_0_0_1px_#f4f4f4]" /></td>${cells}</tr>`;
    }
    document.getElementById('rows').innerHTML = rows;
  </script>
</body>
</html>
